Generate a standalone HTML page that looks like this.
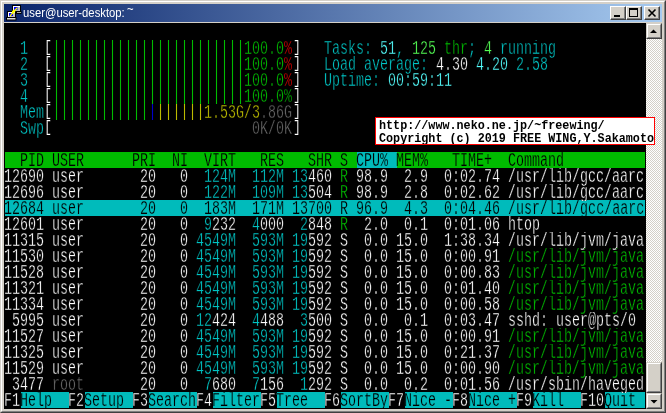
<!DOCTYPE html>
<html>
<head>
<meta charset="utf-8">
<title>user@user-desktop: ~</title>
<style>
html,body{margin:0;padding:0}
body{width:666px;height:413px;overflow:hidden;background:#d4d0c8;position:relative;font-family:"Liberation Sans",sans-serif}
#win{position:absolute;left:0;top:0;width:666px;height:413px;box-sizing:border-box;background:#d4d0c8;
 border-top:1px solid #d4d0c8;border-left:1px solid #d4d0c8;border-right:1px solid #404040;border-bottom:1px solid #404040}
#win2{position:absolute;left:0;top:0;width:664px;height:411px;box-sizing:border-box;
 border-top:1px solid #fff;border-left:1px solid #fff;border-right:1px solid #808080;border-bottom:1px solid #808080}
#title{will-change:transform;position:absolute;left:4px;top:4px;width:658px;height:18px;background:linear-gradient(to right,#0a246a 0%,#a6caf0 100%)}
#ttext{position:absolute;left:19px;top:0;height:18px;line-height:18px;font-size:12px;color:#fff;white-space:pre;font-family:"Liberation Sans",sans-serif;transform:scaleX(0.94);transform-origin:0 0}
.tb{position:absolute;top:2px;width:16px;height:14px;box-sizing:border-box;background:#d4d0c8;
 border-top:1px solid #fff;border-left:1px solid #fff;border-right:1px solid #404040;border-bottom:1px solid #404040}
.tb:after{content:"";position:absolute;left:0;top:0;right:0;bottom:0;border-right:1px solid #808080;border-bottom:1px solid #808080}
#term{will-change:transform;position:absolute;left:4px;top:23px;width:642px;height:386px;background:#000;overflow:hidden}
.b{position:absolute;height:16px;display:block}
.r{position:absolute;left:0;width:642px;height:19px;overflow:hidden}
.r.k{height:16px}
.r.k2{height:17px}
.t{position:absolute;top:1px;height:16px;line-height:16px;font-family:"Liberation Mono",monospace;font-size:20px;white-space:pre;
 transform:scaleX(0.6667);transform-origin:0 0;-webkit-text-stroke:0.4px #000}
.sg{-webkit-text-stroke:0.25px #00bb00}
.sc{-webkit-text-stroke:0.25px #00bbbb}
.bar{top:0;line-height:18px;overflow:hidden;transform:translateX(0.5px) scaleX(0.6667);-webkit-text-stroke:0}
.brr{margin-left:1px}
.br{font-size:16px;transform:scaleX(0.8333);top:0;-webkit-text-stroke:0.2px #000}
.fc{color:#00c4c4}
.fC{color:#55ffff}
.fg{color:#00bb00}
.fG{color:#55ff55}
.fr{color:#ee0000}
.fy{color:#bbbb00}
.fb{color:#0000cc}
.fk{color:#666666}
.fw{color:#ffffff}
.fK{color:#000000}
#sb{position:absolute;left:646px;top:23px;width:16px;height:386px;
 background-color:#fff;
 background-image:linear-gradient(45deg,#d4d0c8 25%,transparent 25%,transparent 75%,#d4d0c8 75%),linear-gradient(45deg,#d4d0c8 25%,transparent 25%,transparent 75%,#d4d0c8 75%);
 background-size:2px 2px;background-position:0 0,1px 1px}
.sbtn{position:absolute;left:0;width:16px;height:16px;box-sizing:border-box;background:#d4d0c8;
 border-top:1px solid #d4d0c8;border-left:1px solid #d4d0c8;border-right:1px solid #404040;border-bottom:1px solid #404040}
.sbtn:after{content:"";position:absolute;left:0;top:0;right:0;bottom:0;border-top:1px solid #fff;border-left:1px solid #fff;border-right:1px solid #808080;border-bottom:1px solid #808080}
.sbtn svg,.tb svg{position:absolute;left:0;top:0}
#note{will-change:transform;position:absolute;left:375px;top:117px;width:280px;height:28px;box-sizing:border-box;border:1px solid #f00;background:#fff;overflow:hidden}
.n{position:absolute;left:3px;height:13px;line-height:13px;font-family:"Liberation Mono",monospace;font-weight:bold;font-size:12.5px;color:#000;white-space:pre;
 transform:scaleX(0.94);transform-origin:0 0}
</style>
</head>
<body>
<div id="win"><div id="win2"></div></div>
<div id="title">
 <svg id="icon" width="20" height="18" viewBox="0 0 20 18" style="position:absolute;left:0;top:0">
  <rect x="12.5" y="7.5" width="4.5" height="2" fill="#a8a8a8" stroke="#000" stroke-width="1"/>
  <rect x="8.5" y="1.5" width="8" height="6" fill="#c0c0c0" stroke="#000" stroke-width="1"/>
  <path d="M9 2.5 H16 M9.5 2 V7" stroke="#fff" stroke-width="1" fill="none"/>
  <rect x="10" y="3" width="3.5" height="3" fill="#0000ff"/>
  <rect x="3.5" y="7.5" width="8" height="6" fill="#c0c0c0" stroke="#000" stroke-width="1"/>
  <path d="M4 8.5 H11 M4.5 8 V13" stroke="#fff" stroke-width="1" fill="none"/>
  <rect x="5" y="9" width="4" height="3" fill="#0000ff"/>
  <rect x="2.5" y="13.5" width="9.5" height="2.5" fill="#dcdcdc" stroke="#000" stroke-width="1"/>
  <path d="M13 4 L6 12" stroke="#ffff00" stroke-width="1.2" fill="none"/>
  <path d="M8 7 L10 5.5 L11.5 6.5 L11 8 L9.5 9.5 L8 9 Z" fill="#ffff00"/>
 </svg>
 <div id="ttext">user@user-desktop: <span style="position:relative;top:-4px;left:-1px">~</span></div>
 <div class="tb" style="left:606px"><svg width="16" height="14"><rect x="3" y="8" width="6" height="2" fill="#000"/></svg></div>
 <div class="tb" style="left:622px"><svg width="16" height="14"><rect x="2.5" y="1.5" width="8" height="8" fill="none" stroke="#000"/><rect x="2" y="1" width="9" height="2" fill="#000"/></svg></div>
 <div class="tb" style="left:640px"><svg width="16" height="14"><path d="M3.5 2.5 L10.5 9.5 M10.5 2.5 L3.5 9.5" stroke="#000" stroke-width="1.6" fill="none"/></svg></div>
</div>
<div id="term">
<i class="b" style="left:1px;top:129px;width:640px;background:#00bb00"></i>
<i class="b" style="left:353px;top:129px;width:40px;background:#00bbbb"></i>
<i class="b" style="left:1px;top:177px;width:640px;background:#00bbbb"></i>
<i class="b" style="left:17px;top:369px;width:48px;background:#00bbbb"></i>
<i class="b" style="left:81px;top:369px;width:48px;background:#00bbbb"></i>
<i class="b" style="left:145px;top:369px;width:48px;background:#00bbbb"></i>
<i class="b" style="left:209px;top:369px;width:48px;background:#00bbbb"></i>
<i class="b" style="left:273px;top:369px;width:48px;background:#00bbbb"></i>
<i class="b" style="left:337px;top:369px;width:48px;background:#00bbbb"></i>
<i class="b" style="left:401px;top:369px;width:48px;background:#00bbbb"></i>
<i class="b" style="left:465px;top:369px;width:48px;background:#00bbbb"></i>
<i class="b" style="left:529px;top:369px;width:48px;background:#00bbbb"></i>
<i class="b" style="left:601px;top:369px;width:40px;background:#00bbbb"></i>
<div class="r" style="top:17px">
<span class="t fc" style="left:16px">1</span>
<span class="t fw br" style="left:40px">[</span>
<span class="t fg bar" style="left:48px">||||||||||||||||||||||||</span>
<span class="t fg" style="left:240px">100.0</span>
<span class="t fr" style="left:280px">%</span>
<span class="t fw br brr" style="left:288px">]</span>
<span class="t fc" style="left:320px">Tasks: </span>
<span class="t fC" style="left:376px">51</span>
<span class="t fc" style="left:392px">, </span>
<span class="t fG" style="left:408px">125</span>
<span class="t fg" style="left:432px"> thr</span>
<span class="t fc" style="left:464px">; </span>
<span class="t fG" style="left:480px">4</span>
<span class="t fc" style="left:488px"> running</span>
</div>
<div class="r" style="top:33px">
<span class="t fc" style="left:16px">2</span>
<span class="t fw br" style="left:40px">[</span>
<span class="t fg bar" style="left:48px">||||||||||||||||||||||||</span>
<span class="t fg" style="left:240px">100.0</span>
<span class="t fr" style="left:280px">%</span>
<span class="t fw br brr" style="left:288px">]</span>
<span class="t fc" style="left:320px">Load average: </span>
<span class="t fw" style="left:432px">4.30 </span>
<span class="t fC" style="left:472px">4.20 </span>
<span class="t fc" style="left:512px">2.58</span>
</div>
<div class="r" style="top:49px">
<span class="t fc" style="left:16px">3</span>
<span class="t fw br" style="left:40px">[</span>
<span class="t fg bar" style="left:48px">||||||||||||||||||||||||</span>
<span class="t fg" style="left:240px">100.0</span>
<span class="t fr" style="left:280px">%</span>
<span class="t fw br brr" style="left:288px">]</span>
<span class="t fc" style="left:320px">Uptime: </span>
<span class="t fC" style="left:384px">00:59:11</span>
</div>
<div class="r" style="top:65px">
<span class="t fc" style="left:16px">4</span>
<span class="t fw br" style="left:40px">[</span>
<span class="t fg bar" style="left:48px">||||||||||||||||||||||||</span>
<span class="t fg" style="left:240px">100.0%</span>
<span class="t fw br brr" style="left:288px">]</span>
</div>
<div class="r" style="top:81px">
<span class="t fc" style="left:16px">Mem</span>
<span class="t fw br" style="left:40px">[</span>
<span class="t fg bar" style="left:48px">||||||||||||</span>
<span class="t fb bar" style="left:144px">|</span>
<span class="t fy bar" style="left:152px">||||||</span>
<span class="t fy" style="left:200px">1.53G/3</span>
<span class="t fk" style="left:256px">.86G</span>
<span class="t fw br brr" style="left:288px">]</span>
</div>
<div class="r" style="top:97px">
<span class="t fc" style="left:16px">Swp</span>
<span class="t fw br" style="left:40px">[</span>
<span class="t fk" style="left:248px">0K/0K</span>
<span class="t fw br brr" style="left:288px">]</span>
</div>
<div class="r k" style="top:129px">
<span class="t fK sg" style="left:0px">  PID USER      PRI  NI  VIRT   RES   SHR S </span>
<span class="t fK sc" style="left:352px">CPU% </span>
<span class="t fK sg" style="left:392px">MEM%   TIME+  Command</span>
</div>
<div class="r" style="top:145px">
<span class="t fw" style="left:0px">12690</span>
<span class="t fw" style="left:48px">user</span>
<span class="t fw" style="left:136px">20</span>
<span class="t fw" style="left:176px">0</span>
<span class="t fc" style="left:200px">124M</span>
<span class="t fc" style="left:248px">112M</span>
<span class="t fc" style="left:288px">13</span>
<span class="t fw" style="left:304px">460</span>
<span class="t fg" style="left:336px">R</span>
<span class="t fw" style="left:352px">98.9  2.9  0:02.74</span>
<span class="t fw" style="left:504px">/usr/lib/gcc/aarc</span>
</div>
<div class="r k2" style="top:161px">
<span class="t fw" style="left:0px">12696</span>
<span class="t fw" style="left:48px">user</span>
<span class="t fw" style="left:136px">20</span>
<span class="t fw" style="left:176px">0</span>
<span class="t fc" style="left:200px">122M</span>
<span class="t fc" style="left:248px">109M</span>
<span class="t fc" style="left:288px">13</span>
<span class="t fw" style="left:304px">504</span>
<span class="t fg" style="left:336px">R</span>
<span class="t fw" style="left:352px">98.9  2.8  0:02.62</span>
<span class="t fw" style="left:504px">/usr/lib/gcc/aarc</span>
</div>
<div class="r k" style="top:177px">
<span class="t fK sc" style="left:0px">12684 user       20   0  183M  171M 13700 R 96.9  4.3  0:04.46 /usr/lib/gcc/aarc</span>
</div>
<div class="r" style="top:193px">
<span class="t fw" style="left:0px">12601</span>
<span class="t fw" style="left:48px">user</span>
<span class="t fw" style="left:136px">20</span>
<span class="t fw" style="left:176px">0</span>
<span class="t fc" style="left:200px">9</span>
<span class="t fw" style="left:208px">232</span>
<span class="t fc" style="left:248px">4</span>
<span class="t fw" style="left:256px">000</span>
<span class="t fc" style="left:296px">2</span>
<span class="t fw" style="left:304px">848</span>
<span class="t fg" style="left:336px">R</span>
<span class="t fw" style="left:352px"> 2.0  0.1  0:01.06</span>
<span class="t fw" style="left:504px">htop</span>
</div>
<div class="r" style="top:209px">
<span class="t fw" style="left:0px">11315</span>
<span class="t fw" style="left:48px">user</span>
<span class="t fw" style="left:136px">20</span>
<span class="t fw" style="left:176px">0</span>
<span class="t fc" style="left:192px">4549M</span>
<span class="t fc" style="left:248px">593M</span>
<span class="t fc" style="left:288px">19</span>
<span class="t fw" style="left:304px">592</span>
<span class="t fw" style="left:336px">S</span>
<span class="t fw" style="left:352px"> 0.0 15.0  1:38.34</span>
<span class="t fw" style="left:504px">/usr/lib/jvm/java</span>
</div>
<div class="r" style="top:225px">
<span class="t fw" style="left:0px">11530</span>
<span class="t fw" style="left:48px">user</span>
<span class="t fw" style="left:136px">20</span>
<span class="t fw" style="left:176px">0</span>
<span class="t fc" style="left:192px">4549M</span>
<span class="t fc" style="left:248px">593M</span>
<span class="t fc" style="left:288px">19</span>
<span class="t fw" style="left:304px">592</span>
<span class="t fw" style="left:336px">S</span>
<span class="t fw" style="left:352px"> 0.0 15.0  0:00.91</span>
<span class="t fg" style="left:504px">/usr/lib/jvm/java</span>
</div>
<div class="r" style="top:241px">
<span class="t fw" style="left:0px">11528</span>
<span class="t fw" style="left:48px">user</span>
<span class="t fw" style="left:136px">20</span>
<span class="t fw" style="left:176px">0</span>
<span class="t fc" style="left:192px">4549M</span>
<span class="t fc" style="left:248px">593M</span>
<span class="t fc" style="left:288px">19</span>
<span class="t fw" style="left:304px">592</span>
<span class="t fw" style="left:336px">S</span>
<span class="t fw" style="left:352px"> 0.0 15.0  0:00.83</span>
<span class="t fg" style="left:504px">/usr/lib/jvm/java</span>
</div>
<div class="r" style="top:257px">
<span class="t fw" style="left:0px">11321</span>
<span class="t fw" style="left:48px">user</span>
<span class="t fw" style="left:136px">20</span>
<span class="t fw" style="left:176px">0</span>
<span class="t fc" style="left:192px">4549M</span>
<span class="t fc" style="left:248px">593M</span>
<span class="t fc" style="left:288px">19</span>
<span class="t fw" style="left:304px">592</span>
<span class="t fw" style="left:336px">S</span>
<span class="t fw" style="left:352px"> 0.0 15.0  0:01.40</span>
<span class="t fg" style="left:504px">/usr/lib/jvm/java</span>
</div>
<div class="r" style="top:273px">
<span class="t fw" style="left:0px">11334</span>
<span class="t fw" style="left:48px">user</span>
<span class="t fw" style="left:136px">20</span>
<span class="t fw" style="left:176px">0</span>
<span class="t fc" style="left:192px">4549M</span>
<span class="t fc" style="left:248px">593M</span>
<span class="t fc" style="left:288px">19</span>
<span class="t fw" style="left:304px">592</span>
<span class="t fw" style="left:336px">S</span>
<span class="t fw" style="left:352px"> 0.0 15.0  0:00.58</span>
<span class="t fg" style="left:504px">/usr/lib/jvm/java</span>
</div>
<div class="r" style="top:289px">
<span class="t fw" style="left:0px"> 5995</span>
<span class="t fw" style="left:48px">user</span>
<span class="t fw" style="left:136px">20</span>
<span class="t fw" style="left:176px">0</span>
<span class="t fc" style="left:192px">12</span>
<span class="t fw" style="left:208px">424</span>
<span class="t fc" style="left:248px">4</span>
<span class="t fw" style="left:256px">488</span>
<span class="t fc" style="left:296px">3</span>
<span class="t fw" style="left:304px">500</span>
<span class="t fw" style="left:336px">S</span>
<span class="t fw" style="left:352px"> 0.0  0.1  0:03.47</span>
<span class="t fw" style="left:504px">sshd: user@pts/0</span>
</div>
<div class="r" style="top:305px">
<span class="t fw" style="left:0px">11527</span>
<span class="t fw" style="left:48px">user</span>
<span class="t fw" style="left:136px">20</span>
<span class="t fw" style="left:176px">0</span>
<span class="t fc" style="left:192px">4549M</span>
<span class="t fc" style="left:248px">593M</span>
<span class="t fc" style="left:288px">19</span>
<span class="t fw" style="left:304px">592</span>
<span class="t fw" style="left:336px">S</span>
<span class="t fw" style="left:352px"> 0.0 15.0  0:00.91</span>
<span class="t fg" style="left:504px">/usr/lib/jvm/java</span>
</div>
<div class="r" style="top:321px">
<span class="t fw" style="left:0px">11325</span>
<span class="t fw" style="left:48px">user</span>
<span class="t fw" style="left:136px">20</span>
<span class="t fw" style="left:176px">0</span>
<span class="t fc" style="left:192px">4549M</span>
<span class="t fc" style="left:248px">593M</span>
<span class="t fc" style="left:288px">19</span>
<span class="t fw" style="left:304px">592</span>
<span class="t fw" style="left:336px">S</span>
<span class="t fw" style="left:352px"> 0.0 15.0  0:21.37</span>
<span class="t fg" style="left:504px">/usr/lib/jvm/java</span>
</div>
<div class="r" style="top:337px">
<span class="t fw" style="left:0px">11529</span>
<span class="t fw" style="left:48px">user</span>
<span class="t fw" style="left:136px">20</span>
<span class="t fw" style="left:176px">0</span>
<span class="t fc" style="left:192px">4549M</span>
<span class="t fc" style="left:248px">593M</span>
<span class="t fc" style="left:288px">19</span>
<span class="t fw" style="left:304px">592</span>
<span class="t fw" style="left:336px">S</span>
<span class="t fw" style="left:352px"> 0.0 15.0  0:00.90</span>
<span class="t fg" style="left:504px">/usr/lib/jvm/java</span>
</div>
<div class="r k2" style="top:353px">
<span class="t fw" style="left:0px"> 3477</span>
<span class="t fk" style="left:48px">root</span>
<span class="t fw" style="left:136px">20</span>
<span class="t fw" style="left:176px">0</span>
<span class="t fc" style="left:200px">7</span>
<span class="t fw" style="left:208px">680</span>
<span class="t fc" style="left:248px">7</span>
<span class="t fw" style="left:256px">156</span>
<span class="t fc" style="left:296px">1</span>
<span class="t fw" style="left:304px">292</span>
<span class="t fw" style="left:336px">S</span>
<span class="t fw" style="left:352px"> 0.0  0.2  0:01.56</span>
<span class="t fw" style="left:504px">/usr/sbin/haveged</span>
</div>
<div class="r k" style="top:369px">
<span class="t fw" style="left:0px">F1</span>
<span class="t fK sc" style="left:16px">Help  </span>
<span class="t fw" style="left:64px">F2</span>
<span class="t fK sc" style="left:80px">Setup </span>
<span class="t fw" style="left:128px">F3</span>
<span class="t fK sc" style="left:144px">Search</span>
<span class="t fw" style="left:192px">F4</span>
<span class="t fK sc" style="left:208px">Filter</span>
<span class="t fw" style="left:256px">F5</span>
<span class="t fK sc" style="left:272px">Tree  </span>
<span class="t fw" style="left:320px">F6</span>
<span class="t fK sc" style="left:336px">SortBy</span>
<span class="t fw" style="left:384px">F7</span>
<span class="t fK sc" style="left:400px">Nice -</span>
<span class="t fw" style="left:448px">F8</span>
<span class="t fK sc" style="left:464px">Nice +</span>
<span class="t fw" style="left:512px">F9</span>
<span class="t fK sc" style="left:528px">Kill  </span>
<span class="t fw" style="left:576px">F10</span>
<span class="t fK sc" style="left:600px">Quit </span>
</div>
</div>
<div id="sb">
 <div class="sbtn" style="top:0"><svg width="16" height="16"><path d="M3 9 L10 9 L6.5 5.5 Z" fill="#000"/></svg></div>
 <div class="sbtn" style="top:339px;height:31px"></div>
 <div class="sbtn" style="top:370px"><svg width="16" height="16"><path d="M3.5 6 L10.5 6 L7 9.5 Z" fill="#000"/></svg></div>
</div>
<div id="note">
 <div class="n" style="top:2px">http://www.neko.ne.jp/~freewing/</div>
 <div class="n" style="top:15px">Copyright (c) 2019 FREE WING,Y.Sakamoto</div>
</div>
</body>
</html>
